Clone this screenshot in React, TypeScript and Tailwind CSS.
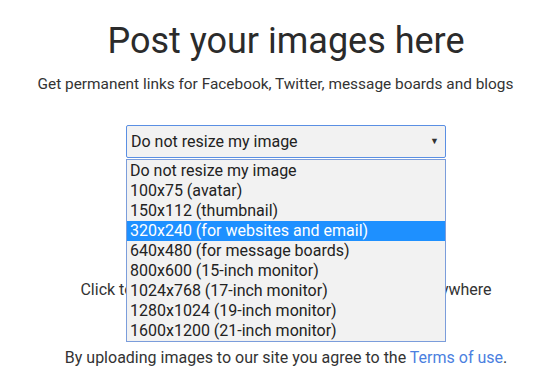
import React from 'react'

const sizes = [
  'Do not resize my image',
  '100x75 (avatar)',
  '150x112 (thumbnail)',
  '320x240 (for websites and email)',
  '640x480 (for message boards)',
  '800x600 (15-inch monitor)',
  '1024x768 (17-inch monitor)',
  '1280x1024 (19-inch monitor)',
  '1600x1200 (21-inch monitor)',
]

export default function App() {
  const selected = 3
  return (
    <div className="w-[542px] h-[378px] overflow-hidden bg-white pl-[30px] text-[#333] font-['Roboto',sans-serif]">
      <div className="flex flex-col items-center">
        <h1 className="mt-[21px] text-[36px] leading-[40px] text-[#2b2b2b]">Post your images here</h1>
        <p className="mt-[13px] pr-[21px] text-[15.4px] leading-[20px] whitespace-nowrap text-[#333]">
          Get permanent links for Facebook, Twitter, message boards and blogs
        </p>

        <div className="relative mt-[31px] w-[320px]">
          <div className="flex h-[33px] items-center justify-between rounded-[2px] border border-[#5a8fe3] bg-[#f2f2f2] pl-[4px] pr-[6px] text-[16px] text-[#222]">
            <span>Do not resize my image</span>
            <span className="text-[9px] text-[#333]">▼</span>
          </div>
          <ul className="absolute left-0 top-[34px] z-10 w-[320px] border border-[#7b9ddb] bg-[#f2f2f2] pt-[1px] text-[16px] text-[#222]">
            {sizes.map((s, i) => (
              <li
                key={s}
                className={i === selected ? 'h-[20px] pl-[3px] leading-[20px] bg-[#1e90ff] text-white' : 'h-[20px] pl-[3px] leading-[20px]'}
              >
                {s}
              </li>
            ))}
          </ul>
        </div>

        <p className="mt-[122px] text-[16px] leading-[20px] whitespace-nowrap">
          Click to select images or drag &amp; drop them from anywhere
        </p>

        <p className="mt-[48px] text-[16px] leading-[20px] whitespace-nowrap">
          By uploading images to our site you agree to the{' '}
          <a href="#" className="text-[#4b7fe0]">Terms of use</a>.
        </p>
      </div>
    </div>
  )
}
